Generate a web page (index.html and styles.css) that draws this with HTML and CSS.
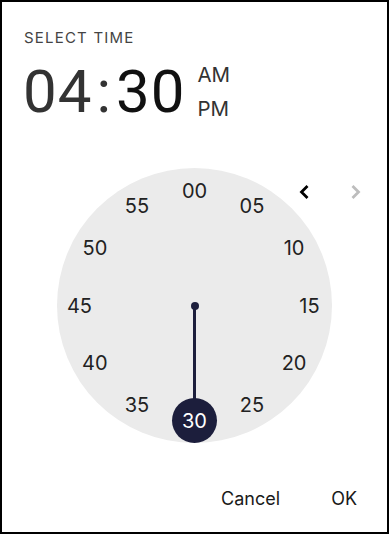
FILE: index.html
```html
<!DOCTYPE html>
<html lang="en">
<head>
<meta charset="utf-8">
<title>Select time</title>
<link rel="stylesheet" href="styles.css">
</head>
<body>
<div class="dialog">
  <div class="toolbar">
    <div class="label">SELECT TIME</div>
    <div class="time-row">
      <span class="t-part t-hours">04</span>
      <span class="t-sep">:</span>
      <span class="t-part t-minutes">30</span>
      <div class="ampm">
        <span class="ampm-item">AM</span>
        <span class="ampm-item">PM</span>
      </div>
    </div>
  </div>
  <div class="clock-area">
    <div class="clock">
      <div class="hand"></div>
      <div class="pin"></div>
      <span class="num p0">00</span>
      <span class="num p1">05</span>
      <span class="num p2">10</span>
      <span class="num p3">15</span>
      <span class="num p4">20</span>
      <span class="num p5">25</span>
      <span class="num p6 selected">30</span>
      <span class="num p7">35</span>
      <span class="num p8">40</span>
      <span class="num p9">45</span>
      <span class="num p10">50</span>
      <span class="num p11">55</span>
      <button class="arrow arrow-prev" aria-label="Previous">
        <svg viewBox="0 0 24 24" width="24" height="24"><polyline points="14.5,6 8.5,12 14.5,18"/></svg>
      </button>
      <button class="arrow arrow-next" aria-label="Next" disabled>
        <svg viewBox="0 0 24 24" width="24" height="24"><polyline points="9.5,6 15.5,12 9.5,18"/></svg>
      </button>
    </div>
  </div>
  <div class="actions">
    <button class="btn">Cancel</button>
    <button class="btn">OK</button>
  </div>
</div>
</body>
</html>
```

FILE: styles.css
```css
* { box-sizing: border-box; }

html, body {
  margin: 0;
  padding: 0;
  background: #fff;
}

body {
  font-family: Inter, "Noto Sans", "Liberation Sans", sans-serif;
  color: #222;
}

.dialog {
  width: 389px;
  height: 534px;
  border: 2px solid #000;
  background: #fff;
  display: flex;
  flex-direction: column;
}

.toolbar {
  padding: 26px 22px 0;
}

.label {
  font-size: 15px;
  line-height: 20px;
  letter-spacing: 1.2px;
  color: #444;
}

.time-row {
  display: flex;
  align-items: flex-start;
  margin-top: 14px;
  margin-left: -1px;
}

.t-part,
.t-sep {
  font-family: Roboto, "Liberation Sans", sans-serif;
  font-size: 60px;
  line-height: 60px;
  font-weight: 400;
}

.t-part { letter-spacing: 1px; }

.t-hours { color: #333; }
.t-minutes { color: #111; }

.t-sep {
  color: #333;
  margin: 0 5px 0 4px;
}

.ampm {
  display: flex;
  flex-direction: column;
  margin-left: 12px;
  margin-top: 0;
  gap: 8px;
}

.ampm-item {
  font-size: 20.5px;
  line-height: 26px;
  color: #333;
}

.clock-area {
  display: flex;
  justify-content: center;
  margin-top: 46px;
}

.clock {
  position: relative;
  width: 275px;
  height: 275px;
  border-radius: 50%;
  background: #ebebeb;
}

.hand {
  position: absolute;
  left: 136.25px;
  top: 137.5px;
  width: 2.5px;
  height: 100px;
  background: #1c1e3c;
}

.pin {
  position: absolute;
  left: 133.5px;
  top: 133.5px;
  width: 8px;
  height: 8px;
  border-radius: 50%;
  background: #1c1e3c;
}

.num {
  position: absolute;
  width: 45px;
  height: 45px;
  margin: -22.5px 0 0 -22.5px;
  border-radius: 50%;
  display: flex;
  align-items: center;
  justify-content: center;
  font-size: 20px;
  color: #222;
}

.num.selected {
  background: #1c1e3c;
  color: #fff;
}

.p0  { left: 137.5px; top: 22.5px; }
.p1  { left: 195px;   top: 37.9px; }
.p2  { left: 237.1px; top: 80px; }
.p3  { left: 252.5px; top: 137.5px; }
.p4  { left: 237.1px; top: 195px; }
.p5  { left: 195px;   top: 237.1px; }
.p6  { left: 137.5px; top: 252.5px; }
.p7  { left: 80px;    top: 237.1px; }
.p8  { left: 37.9px;  top: 195px; }
.p9  { left: 22.5px;  top: 137.5px; }
.p10 { left: 37.9px;  top: 80px; }
.p11 { left: 80px;    top: 37.9px; }

.arrow {
  position: absolute;
  top: 12px;
  width: 24px;
  height: 24px;
  padding: 0;
  border: 0;
  background: transparent;
  display: flex;
}

.arrow svg {
  fill: none;
  stroke: #000;
  stroke-width: 2.8;
}

.arrow-prev { left: 236px; }
.arrow-next { left: 286px; }
.arrow-next svg { stroke: #bdbdbd; }

.actions {
  margin-top: auto;
  display: flex;
  justify-content: flex-end;
  gap: 31px;
  padding: 0 20px 13px;
}

.btn {
  font-family: Inter, "Noto Sans", "Liberation Sans", sans-serif;
  font-size: 18px;
  font-weight: 400;
  line-height: 24px;
  padding: 8px 10px;
  border: 0;
  background: transparent;
  color: #1a1a1a;
}
```
